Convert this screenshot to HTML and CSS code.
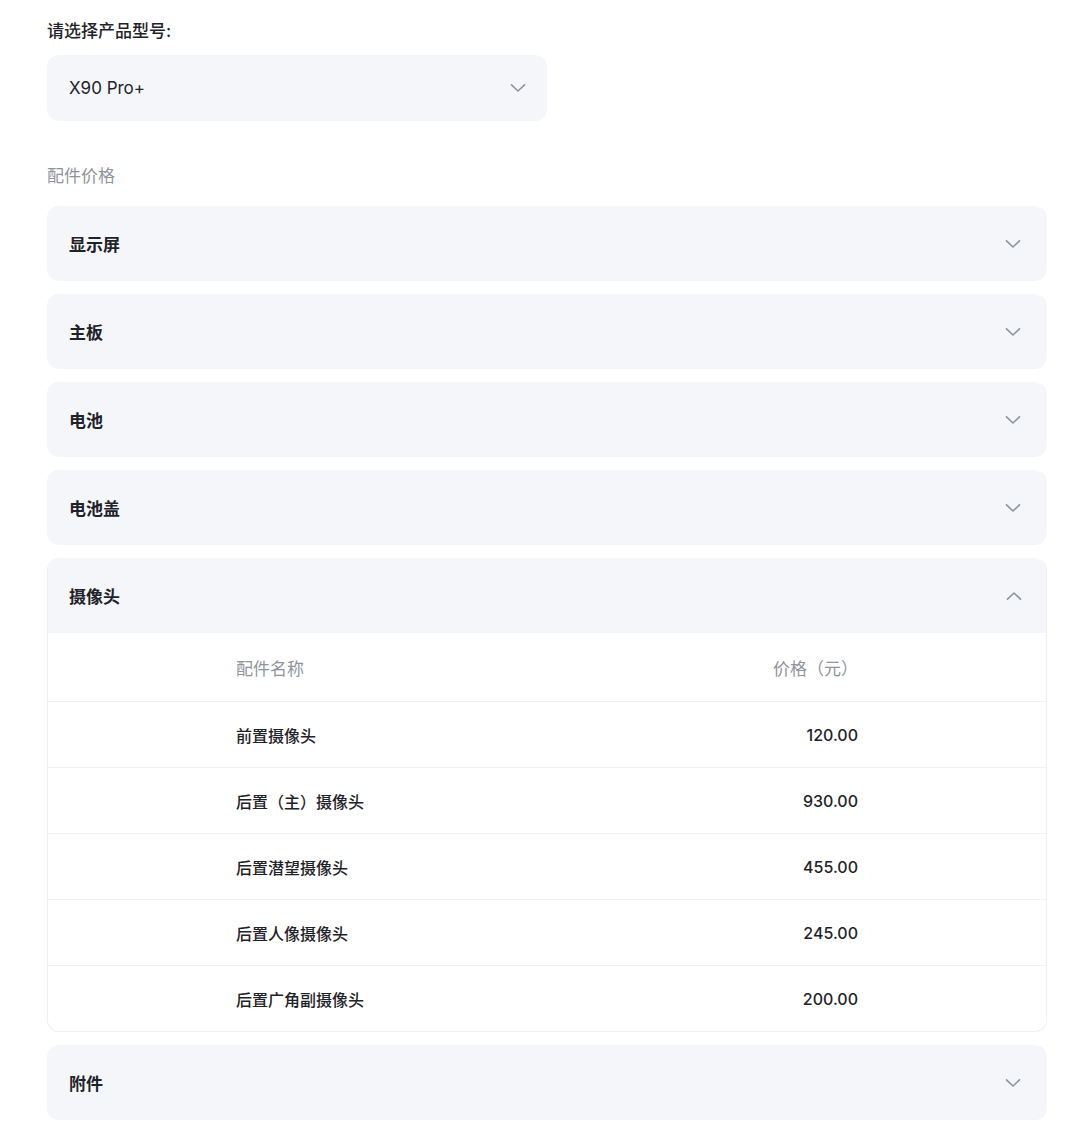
FILE: index.html
```html
<!DOCTYPE html>
<html lang="zh-CN">
<head>
<meta charset="utf-8">
<title>配件价格</title>
<link rel="stylesheet" href="styles.css">
</head>
<body>
<div class="page">
  <div class="field-label">请选择产品型号:</div>
  <div class="select">
    <span class="select-value">X90 Pro+</span>
    <svg class="chev" width="16" height="10" viewBox="0 0 16 10"><path d="M1.5 1.8 L8 8 L14.5 1.8" fill="none" stroke="#8f949c" stroke-width="1.6" stroke-linecap="round" stroke-linejoin="round"/></svg>
  </div>

  <div class="section-title">配件价格</div>

  <div class="list">
    <div class="item">
      <div class="item-head"><span class="item-title">显示屏</span>
        <svg class="chev" width="16" height="10" viewBox="0 0 16 10"><path d="M1.5 1.8 L8 8 L14.5 1.8" fill="none" stroke="#8f949c" stroke-width="1.6" stroke-linecap="round" stroke-linejoin="round"/></svg></div>
    </div>
    <div class="item">
      <div class="item-head"><span class="item-title">主板</span>
        <svg class="chev" width="16" height="10" viewBox="0 0 16 10"><path d="M1.5 1.8 L8 8 L14.5 1.8" fill="none" stroke="#8f949c" stroke-width="1.6" stroke-linecap="round" stroke-linejoin="round"/></svg></div>
    </div>
    <div class="item">
      <div class="item-head"><span class="item-title">电池</span>
        <svg class="chev" width="16" height="10" viewBox="0 0 16 10"><path d="M1.5 1.8 L8 8 L14.5 1.8" fill="none" stroke="#8f949c" stroke-width="1.6" stroke-linecap="round" stroke-linejoin="round"/></svg></div>
    </div>
    <div class="item">
      <div class="item-head"><span class="item-title">电池盖</span>
        <svg class="chev" width="16" height="10" viewBox="0 0 16 10"><path d="M1.5 1.8 L8 8 L14.5 1.8" fill="none" stroke="#8f949c" stroke-width="1.6" stroke-linecap="round" stroke-linejoin="round"/></svg></div>
    </div>
    <div class="item open">
      <div class="item-head"><span class="item-title">摄像头</span>
        <svg class="chev" width="16" height="10" viewBox="0 0 16 10"><path d="M1.5 8.2 L8 2 L14.5 8.2" fill="none" stroke="#8f949c" stroke-width="1.6" stroke-linecap="round" stroke-linejoin="round"/></svg></div>
      <div class="table">
        <div class="row row-head"><span class="c-name">配件名称</span><span class="c-price">价格（元）</span></div>
        <div class="row"><span class="c-name">前置摄像头</span><span class="c-price">120.00</span></div>
        <div class="row"><span class="c-name">后置（主）摄像头</span><span class="c-price">930.00</span></div>
        <div class="row"><span class="c-name">后置潜望摄像头</span><span class="c-price">455.00</span></div>
        <div class="row"><span class="c-name">后置人像摄像头</span><span class="c-price">245.00</span></div>
        <div class="row"><span class="c-name">后置广角副摄像头</span><span class="c-price">200.00</span></div>
      </div>
    </div>
    <div class="item">
      <div class="item-head"><span class="item-title">附件</span>
        <svg class="chev" width="16" height="10" viewBox="0 0 16 10"><path d="M1.5 1.8 L8 8 L14.5 1.8" fill="none" stroke="#8f949c" stroke-width="1.6" stroke-linecap="round" stroke-linejoin="round"/></svg></div>
    </div>
  </div>
</div>
</body>
</html>
```

FILE: styles.css
```css
* { box-sizing: border-box; }
html, body {
  margin: 0;
  padding: 0;
  background: #ffffff;
}
body {
  font-family: Inter, "Noto Sans CJK SC", sans-serif;
  color: #1f2329;
}
.page {
  padding: 19px 33px 0 47px;
  width: 1080px;
}
.field-label {
  font-size: 17px;
  font-weight: 500;
  line-height: 24px;
  color: #1f2329;
}
.select {
  margin-top: 12px;
  width: 500px;
  height: 66px;
  background: #f5f6fa;
  border-radius: 12px;
  display: flex;
  align-items: center;
  justify-content: space-between;
  padding: 0 21px 0 22px;
}
.select-value {
  font-size: 17px;
  color: #1f2329;
}
.section-title {
  margin-top: 43px;
  font-size: 17px;
  line-height: 24px;
  color: #8f949c;
}
.list {
  margin-top: 18px;
  display: flex;
  flex-direction: column;
  gap: 13px;
}
.item {
  width: 1000px;
  background: #f5f6fa;
  border-radius: 12px;
  overflow: hidden;
}
.item-head {
  height: 75px;
  display: flex;
  align-items: center;
  justify-content: space-between;
  padding: 0 26px 0 22px;
}
.item-title {
  font-size: 17px;
  font-weight: 600;
  color: #1f2329;
}
.item.open {
  border: 1px solid #eff0f3;
  border-top: none;
  background: #ffffff;
}
.item.open .item-head {
  background: #f5f6fa;
  padding: 0 25px 0 22px;
  margin: 0 -1px;
}
.table {
  display: flex;
  flex-direction: column;
}
.row {
  height: 66px;
  display: flex;
  align-items: center;
  justify-content: space-between;
  padding: 0 188px 0 188px;
  border-top: 1px solid #f1f2f5;
  font-size: 16px;
  font-weight: 500;
  color: #1f2329;
}
.row.row-head {
  height: 68px;
  border-top: none;
  font-size: 17px;
  font-weight: 400;
  color: #8f949c;
}
.c-price {
  text-align: right;
}
```
